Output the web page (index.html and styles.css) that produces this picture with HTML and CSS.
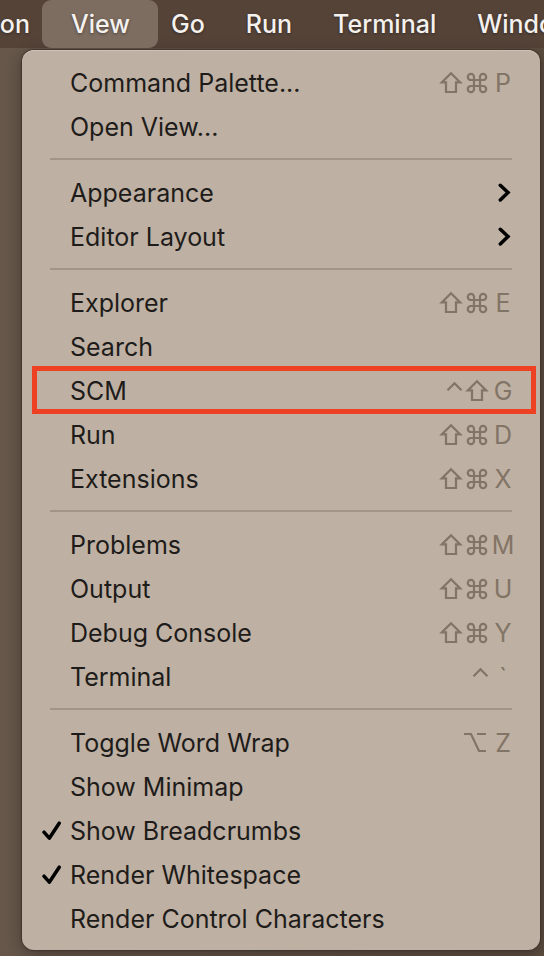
FILE: index.html
```
<!DOCTYPE html>
<html lang="en">
<head>
<meta charset="utf-8">
<meta name="viewport" content="width=device-width, initial-scale=1">
<title>View menu</title>
<link rel="stylesheet" href="styles.css">
</head>
<body>
<svg class="sprite" aria-hidden="true">
  <symbol id="shift" viewBox="0 0 26 26"><path d="M13 3.2 3.8 12.4H8V22H18V12.4H22.2Z"/></symbol>
  <symbol id="cmd" viewBox="0 0 26 26"><path d="M10 10V7A3.1 3.1 0 1 0 7 10H19A3.1 3.1 0 1 0 16 7V19A3.1 3.1 0 1 0 19 16H7A3.1 3.1 0 1 0 10 19Z"/></symbol>
  <symbol id="ctrl" viewBox="0 0 26 26"><path d="M9.5 12.3 16.5 5.3 23.5 12.3"/></symbol>
  <symbol id="option" viewBox="0 0 26 26"><path d="M0 4H7L15 21H22M13 4H22"/></symbol>
  <symbol id="chevron" viewBox="0 0 14 22"><path d="M3.3 3.3 11 10.5 3.3 18"/></symbol>
  <symbol id="check" viewBox="0 0 20 20"><path d="M2 11.2 7.3 17.2 17.2 2.2"/></symbol>
</svg>
<nav class="menubar" aria-label="Menu bar">
  <button class="bar-item clipped">Selection</button>
  <button class="bar-item open" aria-expanded="true">View</button>
  <button class="bar-item">Go</button>
  <button class="bar-item">Run</button>
  <button class="bar-item">Terminal</button>
  <button class="bar-item">Window</button>
</nav>
<main class="menu" role="menu" aria-label="View">
  <button class="item" role="menuitem">Command Palette...<span class="keys"><svg><use href="#shift"/></svg><svg><use href="#cmd"/></svg><kbd>P</kbd></span></button>
  <button class="item" role="menuitem">Open View...</button>
  <hr>
  <button class="item" role="menuitem" aria-haspopup="true">Appearance<svg class="chevron"><use href="#chevron"/></svg></button>
  <button class="item" role="menuitem" aria-haspopup="true">Editor Layout<svg class="chevron"><use href="#chevron"/></svg></button>
  <hr>
  <button class="item" role="menuitem">Explorer<span class="keys"><svg><use href="#shift"/></svg><svg><use href="#cmd"/></svg><kbd>E</kbd></span></button>
  <button class="item" role="menuitem">Search</button>
  <button class="item marked" role="menuitem">SCM<span class="keys"><svg><use href="#ctrl"/></svg><svg><use href="#shift"/></svg><kbd>G</kbd></span></button>
  <button class="item" role="menuitem">Run<span class="keys"><svg><use href="#shift"/></svg><svg><use href="#cmd"/></svg><kbd>D</kbd></span></button>
  <button class="item" role="menuitem">Extensions<span class="keys"><svg><use href="#shift"/></svg><svg><use href="#cmd"/></svg><kbd>X</kbd></span></button>
  <hr>
  <button class="item" role="menuitem">Problems<span class="keys"><svg><use href="#shift"/></svg><svg><use href="#cmd"/></svg><kbd>M</kbd></span></button>
  <button class="item" role="menuitem">Output<span class="keys"><svg><use href="#shift"/></svg><svg><use href="#cmd"/></svg><kbd>U</kbd></span></button>
  <button class="item" role="menuitem">Debug Console<span class="keys"><svg><use href="#shift"/></svg><svg><use href="#cmd"/></svg><kbd>Y</kbd></span></button>
  <button class="item" role="menuitem">Terminal<span class="keys"><svg><use href="#ctrl"/></svg><kbd>`</kbd></span></button>
  <hr>
  <button class="item" role="menuitem">Toggle Word Wrap<span class="keys"><svg><use href="#option"/></svg><kbd>Z</kbd></span></button>
  <button class="item" role="menuitem">Show Minimap</button>
  <button class="item" role="menuitemcheckbox" aria-checked="true"><svg class="check"><use href="#check"/></svg>Show Breadcrumbs</button>
  <button class="item" role="menuitemcheckbox" aria-checked="true"><svg class="check"><use href="#check"/></svg>Render Whitespace</button>
  <button class="item" role="menuitem">Render Control Characters</button>
</main>
</body>
</html>
```
FILE: styles.css
```
* { box-sizing: border-box; }

body {
  margin: 0;
  min-height: 100vh;
  overflow: hidden;
  background: linear-gradient(90deg, #66574a, #5c4c3f);
  font-family: Inter, "Liberation Sans", sans-serif;
  font-size: 25px;
}

button {
  border: 0;
  background: none;
  font: inherit;
  color: inherit;
}

.sprite {
  position: absolute;
  width: 0;
  height: 0;
}

.menubar {
  display: flex;
  height: 48px;
  overflow: hidden;
  background: #554338;
  color: #f4f1ef;
  font-weight: 500;
}

.bar-item {
  flex: none;
  padding: 0 20px 0 21px;
  line-height: 48px;
  text-shadow: 0 1px 3px #0006;
}

.clipped {
  display: flex;
  justify-content: flex-end;
  width: 50px;
}

.open {
  margin: 0 -8px;
  padding: 0 28px 0 29px;
  border-radius: 9px;
  background: #7d6c60;
}

.menu {
  margin: 2px 4px 6px 22px;
  padding: 10px 0;
  border-radius: 12px;
  background: #beb0a2;
  color: #1e1c1a;
  box-shadow: 0 0 1px 1px #42352b, 0 4px 16px #0005, inset 0 1px #cec2b6;
}

.menu hr {
  height: 2px;
  margin: 10px 28px;
  border: 0;
  background: #a29488;
}

.item {
  position: relative;
  display: flex;
  align-items: center;
  width: 100%;
  height: 44px;
  padding: 2px 24px 0 48px;
  text-align: left;
}

.item svg {
  fill: none;
  stroke: currentColor;
}

.keys {
  display: flex;
  margin-left: auto;
  color: #827466;
}

.keys svg {
  width: 26px;
  height: 26px;
  stroke-width: 2.2;
}

.keys kbd {
  width: 26px;
  font: inherit;
  line-height: 26px;
  text-align: center;
}

.item .chevron {
  width: 14px;
  height: 22px;
  margin-left: auto;
  margin-right: 5px;
  color: #000;
  stroke-width: 3.5;
  stroke-linecap: round;
}

.item .check {
  width: 20px;
  height: 20px;
  margin: 0 8px 0 -28px;
  color: #000;
  stroke-width: 3.5;
  stroke-linecap: round;
  stroke-linejoin: round;
}

/* Callout frame around the source control entry */
.marked::after {
  content: "";
  position: absolute;
  inset: -2px 4px -2px 10px;
  border: 5px solid #ee4023;
}
```
